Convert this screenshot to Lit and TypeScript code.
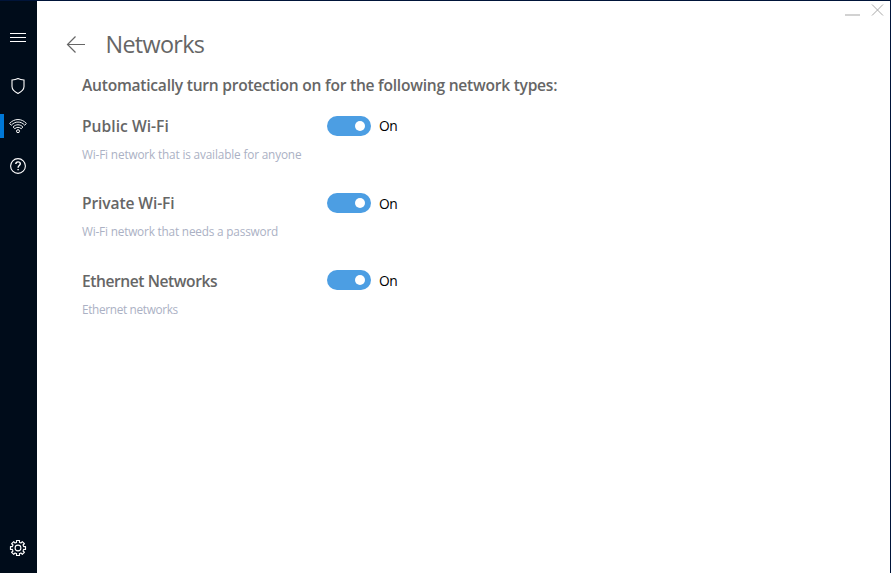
import { LitElement, html, css, svg } from "lit";
import { customElement, property } from "lit/decorators.js";
import { styleMap } from "lit/directives/style-map.js";

const gearPath = (() => {
  const points: string[] = [];
  for (let i = 0; i < 8; i++) {
    const corners: [number, number][] = [
      [5.8, -22.5],
      [5.8, -14],
      [7.7, -11.5],
      [7.7, 11.5],
      [5.8, 14],
    ];
    for (const [radius, offset] of corners) {
      const angle = ((i * 45 + offset) * Math.PI) / 180;
      points.push(`${(9 + radius * Math.cos(angle)).toFixed(2)} ${(9 + radius * Math.sin(angle)).toFixed(2)}`);
    }
  }
  return `M${points.join("L")}Z`;
})();

const icons = {
  menu: svg`<path d="M1 5.5H17M1 9.5H17M1 13.5H17" stroke-width="1"/>`,
  shield: svg`<path d="M9 1.6C7.2 2.6 5.2 3 3 3V9.5C3 12.6 5.4 14.6 9 16.5C12.6 14.6 15 12.6 15 9.5V3C12.8 3 10.8 2.6 9 1.6Z"/>`,
  wifi: svg`<path d="M2.3 8.2L0.6 6.5C5.2 1.2 12.8 1.2 17.4 6.5L15.7 8.2C12 4 6 4 2.3 8.2ZM5.8 11.7L4.1 10C6.9 7 11.1 7 13.9 10L12.2 11.7C10.4 9.9 7.6 9.9 5.8 11.7Z" stroke-width="0.95" stroke-linejoin="round"/><circle cx="9" cy="14.2" r="1.5" stroke-width="1"/>`,
  help: svg`<circle cx="9" cy="9" r="7.4"/><path d="M6.8 7.1C6.8 5.7 7.7 4.9 9 4.9C10.4 4.9 11.3 5.7 11.3 6.8C11.3 8.6 9.1 8.6 9.1 10.7M9.1 11.9V13.2" stroke-width="1.4"/>`,
  gear: svg`<path d=${gearPath} stroke-linejoin="round"/><circle cx="9" cy="9" r="2.9"/>`,
};

@customElement("nav-item")
class NavItem extends LitElement {
  @property() icon: keyof typeof icons = "menu";
  @property({ type: Boolean }) active = false;

  static styles = css`
    :host { display: block; }
    .item { display: flex; align-items: center; box-sizing: border-box; height: 24px; padding-left: 5px; border-left: 4px solid transparent; }
    .active { border-left-color: #0078d7; }
    svg { width: 18px; height: 18px; fill: none; stroke: #fff; stroke-width: 1.1; display: block; }
  `;

  render() {
    return html`<div class="item ${this.active ? "active" : ""}">
      <svg viewBox="0 0 18 18">${icons[this.icon]}</svg>
    </div>`;
  }
}

@customElement("toggle-switch")
class ToggleSwitch extends LitElement {
  static styles = css`
    :host { display: flex; align-items: center; gap: 8px; color: #000; height: 20px; }
    .track { box-sizing: border-box; width: 44px; height: 20px; border-radius: 10px; background: #4c9ee3; display: flex; justify-content: flex-end; align-items: center; padding-right: 6px; }
    .knob { width: 10px; height: 10px; border-radius: 50%; background: #fff; }
    .state { font-size: 13.8px; line-height: 20px; letter-spacing: -0.5px; padding-top: var(--state-drop, 1px); }
  `;

  render() {
    return html`<div class="track"><div class="knob"></div></div><span class="state">On</span>`;
  }
}

@customElement("network-row")
class NetworkRow extends LitElement {
  @property() name = "";
  @property() detail = "";
  @property({ type: Number }) nameTracking = 0;
  @property({ type: Number }) detailTracking = 0;

  static styles = css`
    :host { display: grid; grid-template-columns: 245px auto; grid-template-rows: 20px 20px; row-gap: 8px; justify-content: start; white-space: nowrap; }
    .name { font-weight: 600; font-size: 15.6px; line-height: 20px; color: #666; padding-top: var(--name-drop, 0); }
    .detail { grid-column: 1; font-size: 11.8px; line-height: 20px; color: #abb1c4; padding-top: var(--name-drop, 0); }
  `;

  render() {
    return html`<span class="name" style=${styleMap({ letterSpacing: `${this.nameTracking}px` })}>${this.name}</span>
      <toggle-switch></toggle-switch>
      <span class="detail" style=${styleMap({ letterSpacing: `${this.detailTracking}px` })}>${this.detail}</span>`;
  }
}

const networks = [
  { name: "Public Wi-Fi", detail: "Wi-Fi network that is available for anyone", nameTracking: 0.03, detailTracking: -0.16 },
  { name: "Private Wi-Fi", detail: "Wi-Fi network that needs a password", nameTracking: -0.12, detailTracking: -0.19 },
  { name: "Ethernet Networks", detail: "Ethernet networks", nameTracking: -0.43, detailTracking: -0.33 },
];

@customElement("app-root")
class AppRoot extends LitElement {
  static styles = css`
    :host { display: flex; box-sizing: border-box; width: 891px; height: 573px; border-top: 1px solid #001439; border-right: 1px solid #001439; background: #fff; font-family: "Open Sans", "Noto Sans", sans-serif; overflow: hidden; }
    .sidebar { width: 37px; flex: none; box-sizing: border-box; background: #000c1a; display: flex; flex-direction: column; gap: 16px; padding: 24px 0 13px; }
    .menu { margin-bottom: 9px; }
    .settings { margin-top: auto; }
    .main { flex: 1; display: flex; flex-direction: column; }
    .window { height: 22px; display: flex; justify-content: flex-end; }
    .window svg { width: 48px; height: 22px; fill: none; stroke: #a8a8a8; }
    .header { display: flex; align-items: center; height: 42px; padding: 1px 0 0 29px; gap: 19.5px; }
    .header svg { width: 20px; height: 20px; fill: none; stroke: #666; stroke-width: 1.2; }
    .title { margin: 0; font-weight: 400; font-size: 23.4px; line-height: 40px; padding-bottom: 2px; letter-spacing: -0.7px; color: #666; }
    .content { padding-left: 45px; }
    .intro { margin: 9px 0 21px; font-weight: 600; font-size: 15.6px; line-height: 20px; letter-spacing: -0.25px; color: #666; white-space: nowrap; }
    .rows { display: flex; flex-direction: column; gap: 29px; }
    .rows network-row:first-child { --state-drop: 0; }
    .rows network-row:last-child { --name-drop: 1px; --state-drop: 2px; }
  `;

  render() {
    return html`
      <nav class="sidebar">
        <nav-item class="menu" icon="menu"></nav-item>
        <nav-item icon="shield"></nav-item>
        <nav-item icon="wifi" active></nav-item>
        <nav-item icon="help"></nav-item>
        <nav-item class="settings" icon="gear"></nav-item>
      </nav>
      <main class="main">
        <div class="window">
          <svg viewBox="0 0 48 22"><path d="M3 14H18" stroke-width="2" stroke="#d2d2d2"/><path d="M30 3.5L41 14.5M41 3.5L30 14.5"/></svg>
        </div>
        <header class="header">
          <svg viewBox="0 0 20 20"><path d="M19 9.5H1.5M9.5 1.5L1.5 9.5L9.5 17.5"/></svg>
          <h1 class="title">Networks</h1>
        </header>
        <section class="content">
          <p class="intro">Automatically turn protection on for the following network types:</p>
          <div class="rows">
            ${networks.map(
              (n) => html`<network-row
                name=${n.name}
                detail=${n.detail}
                .nameTracking=${n.nameTracking}
                .detailTracking=${n.detailTracking}
              ></network-row>`,
            )}
          </div>
        </section>
      </main>
    `;
  }
}
